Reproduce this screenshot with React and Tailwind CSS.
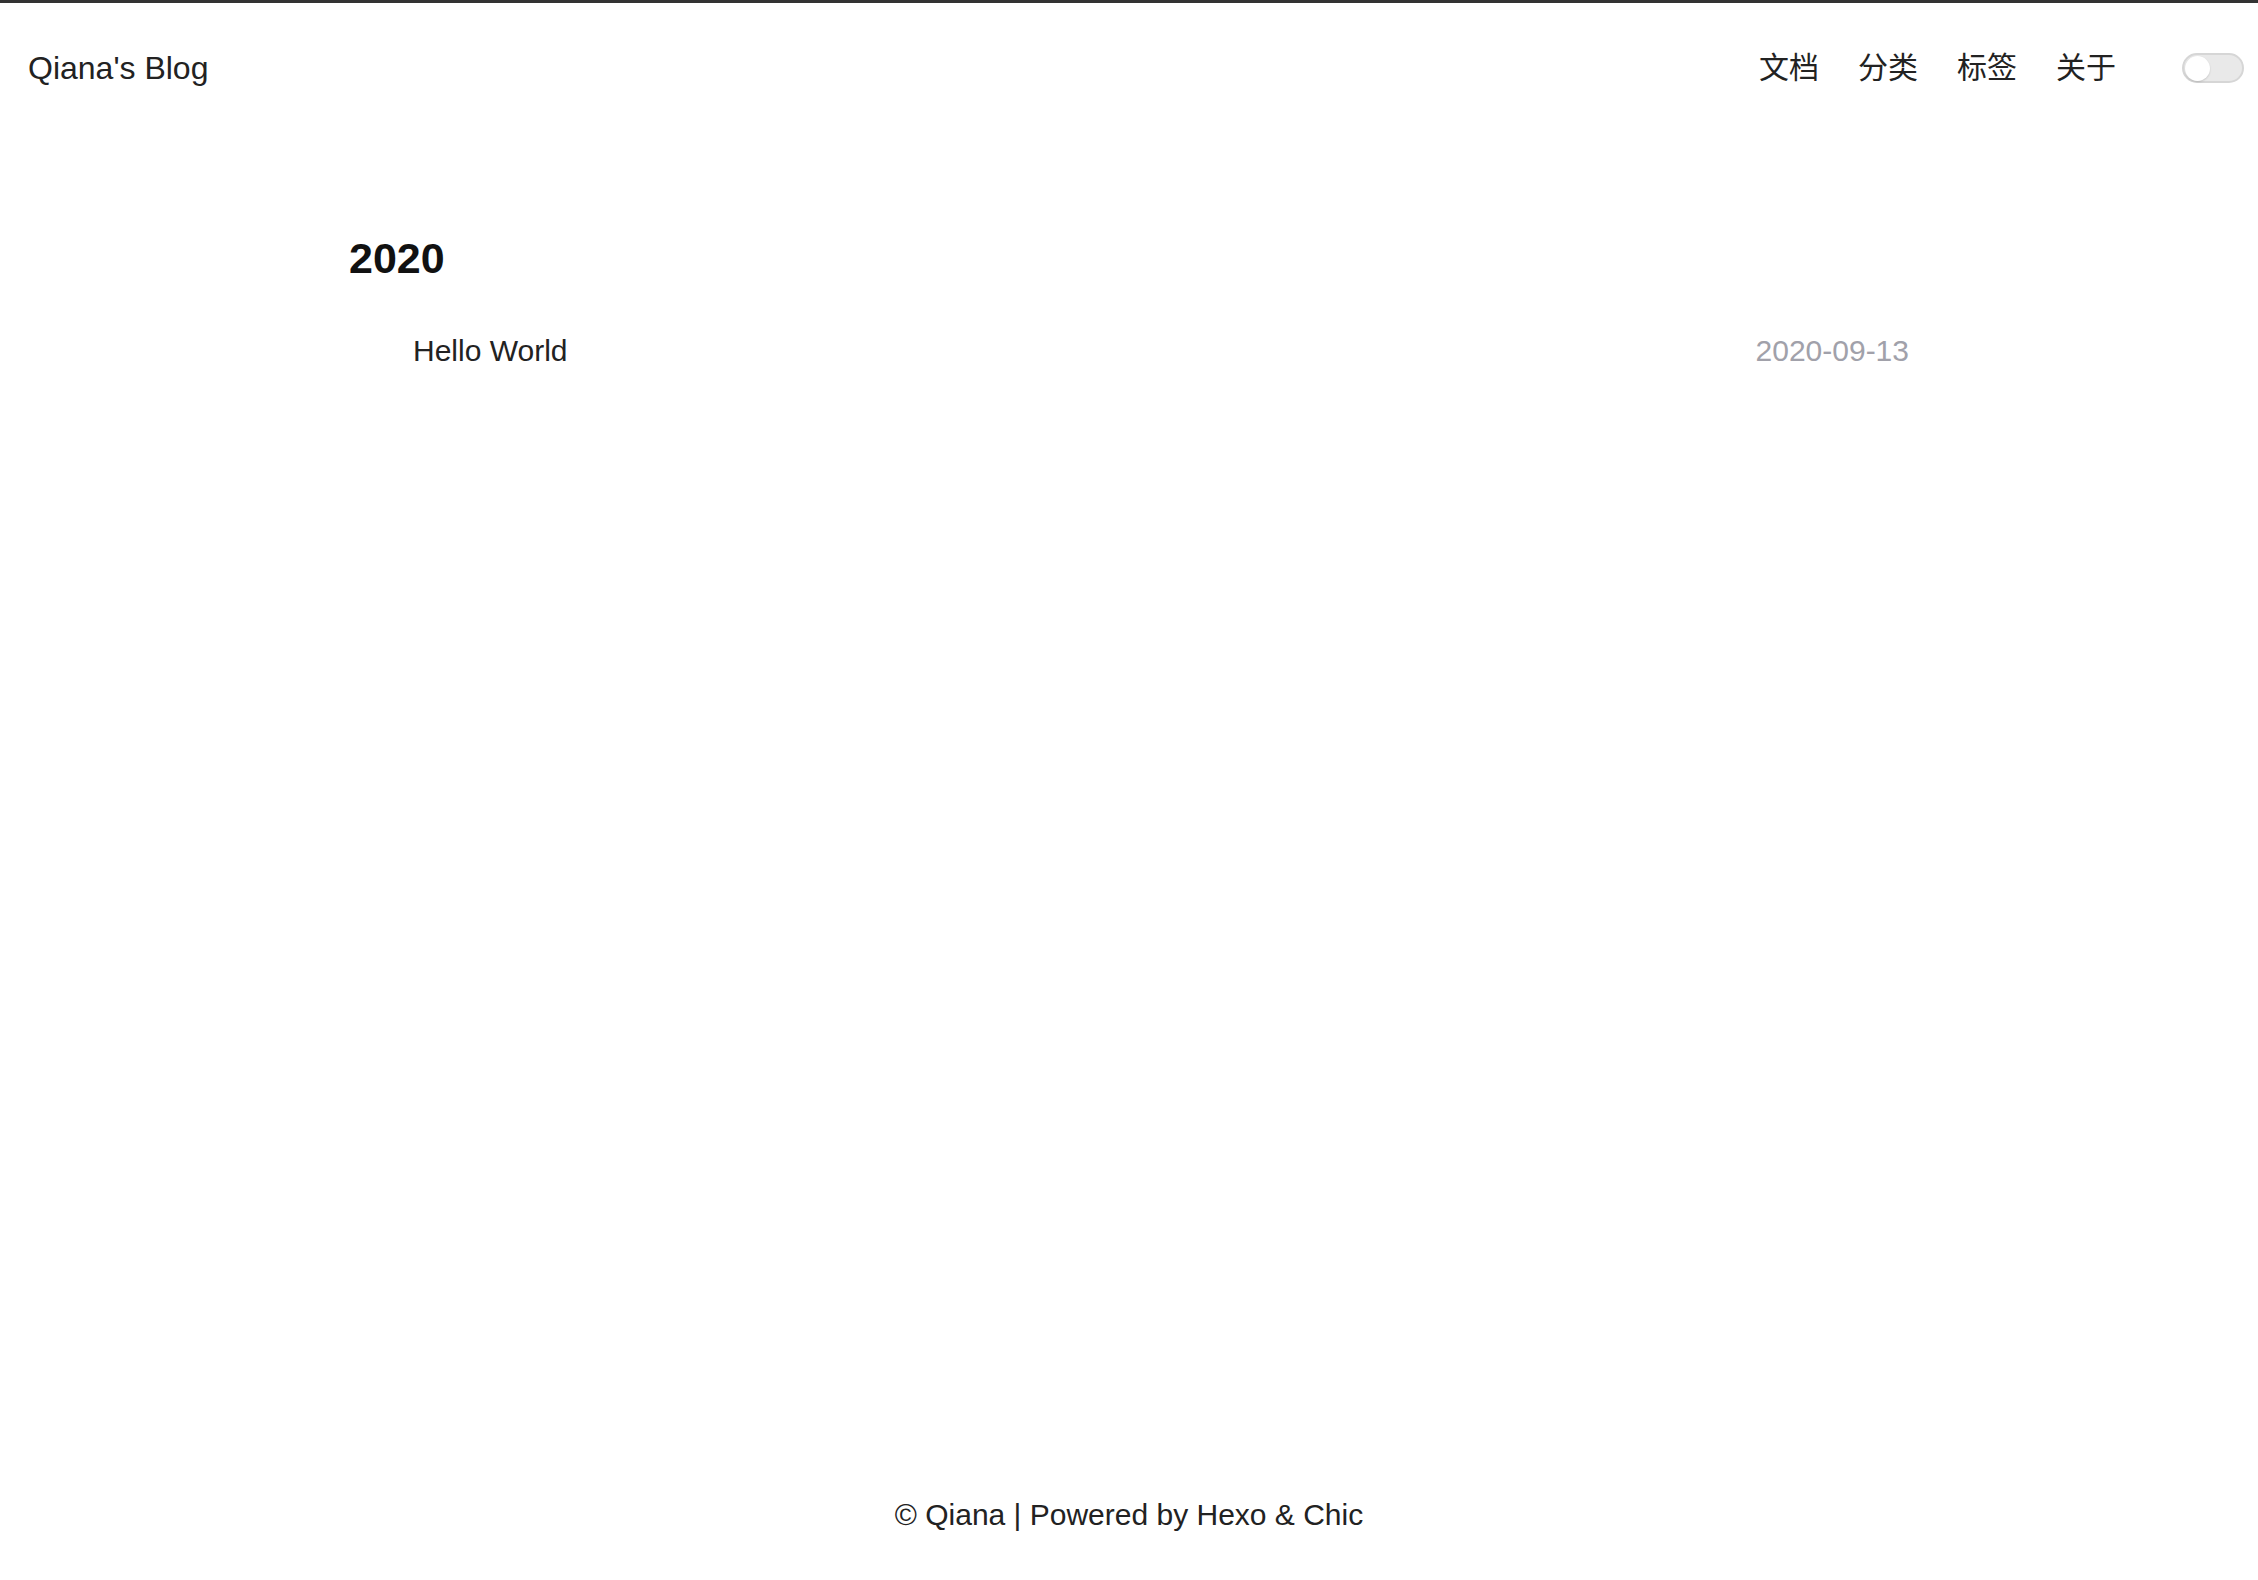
export default function App() {
  const font = { fontFamily: '"Liberation Sans", "Noto Sans CJK SC", Arial, sans-serif' };
  return (
    <div className="min-h-screen flex flex-col bg-white text-[#222] border-t-[3px] border-[#333]" style={font}>
      <header className="h-[130px] flex items-center justify-between pl-[28px] pr-[14px]">
        <a className="text-[32px] leading-none text-[#222]">Qiana's Blog</a>
        <div className="flex items-center">
          <nav className="flex items-center gap-[39px] text-[30px] leading-none font-['Noto_Sans_CJK_SC',sans-serif] text-[#222] mb-[6px]">
            <a>文档</a>
            <a>分类</a>
            <a>标签</a>
            <a>关于</a>
          </nav>
          <div className="ml-[66px] w-[62px] h-[30px] rounded-full bg-[#e9e9e9] border-2 border-[#d6d6d6] flex items-center pl-[1px]">
            <div className="w-[25px] h-[25px] rounded-full bg-white shadow-[0_1px_2px_rgba(0,0,0,0.15)]" />
          </div>
        </div>
      </header>
      <main className="flex-1">
        <div className="w-[1560px] mx-auto">
          <h2 className="mt-[104px] text-[43px] leading-none font-bold text-[#111]">2020</h2>
          <ul className="mt-[56px]">
            <li className="flex items-center justify-between pl-[64px] text-[30px] leading-none">
              <a className="text-[#222]">Hello World</a>
              <span className="text-[#a1a1aa]">2020-09-13</span>
            </li>
          </ul>
        </div>
      </main>
      <footer className="pb-[50px] text-center text-[30px] leading-none text-[#222]">
        © Qiana | Powered by Hexo &amp; Chic
      </footer>
    </div>
  );
}
